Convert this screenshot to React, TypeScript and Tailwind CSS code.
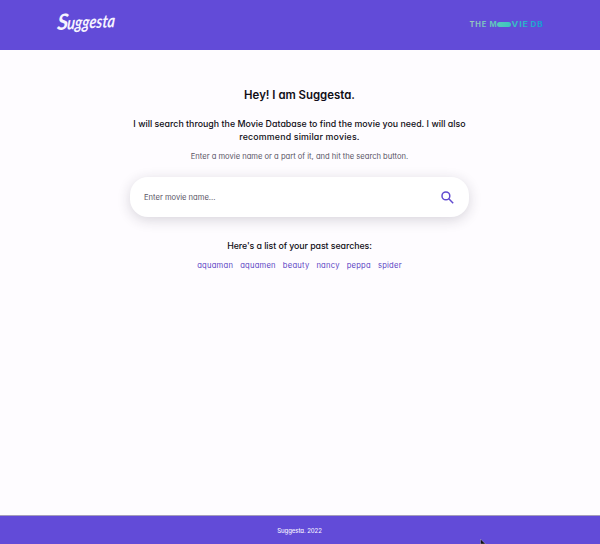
const searches = ['aquaman', 'aquamen', 'beauty', 'nancy', 'peppa', 'spider'];

function SuggestaLogo() {
  return (
    <svg width="60" height="26" viewBox="0 0 60 26" className="block overflow-visible">
      <g transform="rotate(-3 30 13) skewX(-8)" fill="#f6f4ff" className="font-['Lato',sans-serif] font-bold italic">
        <text x="3" y="18.5" textLength="11" lengthAdjust="spacingAndGlyphs" className="text-[22px]">
          S
        </text>
        <text x="13" y="18.5" textLength="48" lengthAdjust="spacingAndGlyphs" className="text-[18px]">
          uggesta
        </text>
      </g>
    </svg>
  );
}

function MovieDbLogo() {
  return (
    <svg width="74" height="8" viewBox="0 0 74 8" className="block overflow-visible">
      <defs>
        <linearGradient id="tmdb" gradientUnits="userSpaceOnUse" x1="0" x2="74" y1="0" y2="0">
          <stop offset="0" stopColor="#a0c4bd" />
          <stop offset="0.5" stopColor="#42c8be" />
          <stop offset="1" stopColor="#159fd2" />
        </linearGradient>
      </defs>
      <g fill="url(#tmdb)" className="font-['Inter',sans-serif] text-[7px] font-bold tracking-[0.7px]">
        <text x="0.5" y="6" textLength="17.5" lengthAdjust="spacingAndGlyphs">THE</text>
        <text x="20.5" y="6" textLength="8" lengthAdjust="spacingAndGlyphs">M</text>
        <rect x="28" y="1" width="14" height="5" rx="2.5" />
        <text x="42.5" y="6" textLength="17.5" lengthAdjust="spacingAndGlyphs">VIE</text>
        <text x="61.5" y="6" textLength="13" lengthAdjust="spacingAndGlyphs">DB</text>
      </g>
    </svg>
  );
}

export default function App() {
  return (
    <div className="relative flex h-[544px] w-[600px] flex-col overflow-hidden bg-[#fefcff] font-['Inter','Open_Sans',sans-serif] text-[#100e16] [font-feature-settings:'cv11']">
      <header className="flex h-[50px] shrink-0 items-start justify-between bg-[#624bd8] pr-[57px] pl-[56px]">
        <div className="pt-[10px]">
          <SuggestaLogo />
        </div>
        <div className="pt-[21px]">
          <MovieDbLogo />
        </div>
      </header>

      <main className="flex grow flex-col items-center pr-[1px] whitespace-nowrap">
        <h1 className="mt-[37px] text-[11.4px] leading-[16px] font-semibold">Hey! I am Suggesta.</h1>
        <h2 className="mt-[14px] text-center text-[8.8px] leading-[13px] font-medium">
          <span className="tracking-[0.03px]">
            I will search through the Movie Database to find the movie you need. I will also
          </span>
          <br />
          <span className="tracking-[0.18px]">recommend similar movies.</span>
        </h2>
        <p className="mt-[8px] text-[7.6px] leading-[12px] text-[#5a5666]">
          Enter a movie name or a part of it, and hit the search button.
        </p>

        <form className="mt-[14px] flex h-[40px] w-[339px] shrink-0 items-center justify-between rounded-[18px] bg-white pr-[15px] pl-[14px] shadow-[0_3px_13px_rgba(40,35,55,0.18)]">
          <span className="pt-px text-[7.6px] text-[#5a5666]">Enter movie name...</span>
          <svg width="13" height="13" viewBox="0 0 13 13" fill="none" stroke="#624bd0" strokeWidth="1.5">
            <circle cx="4.9" cy="4.9" r="3.9" />
            <path d="M7.8 7.8L12.2 12.2" />
          </svg>
        </form>

        <h3 className="mt-[22px] text-[8.8px] leading-[13px] font-medium tracking-[-0.06px]">
          Here's a list of your past searches:
        </h3>
        <ul className="mt-[8px] flex gap-[7px] text-[7.6px] leading-[12px] tracking-[0.24px] text-[#5b44c4]">
          {searches.map((s) => (
            <li key={s}>{s}</li>
          ))}
        </ul>
      </main>

      <footer className="flex h-[29px] shrink-0 items-center justify-center border-t border-[#a49dbb] bg-[#624bd8] pr-[1px] text-[6px] font-medium tracking-[-0.08px] text-[#f3f0ff]">
        Suggesta. 2022
      </footer>

      <svg className="absolute top-[539px] left-[480px]" width="6" height="5" viewBox="0 0 6 5">
        <path d="M.5 0V5H5.5Z" fill="#111" stroke="#c9c3e8" strokeWidth=".4" />
      </svg>
    </div>
  );
}
